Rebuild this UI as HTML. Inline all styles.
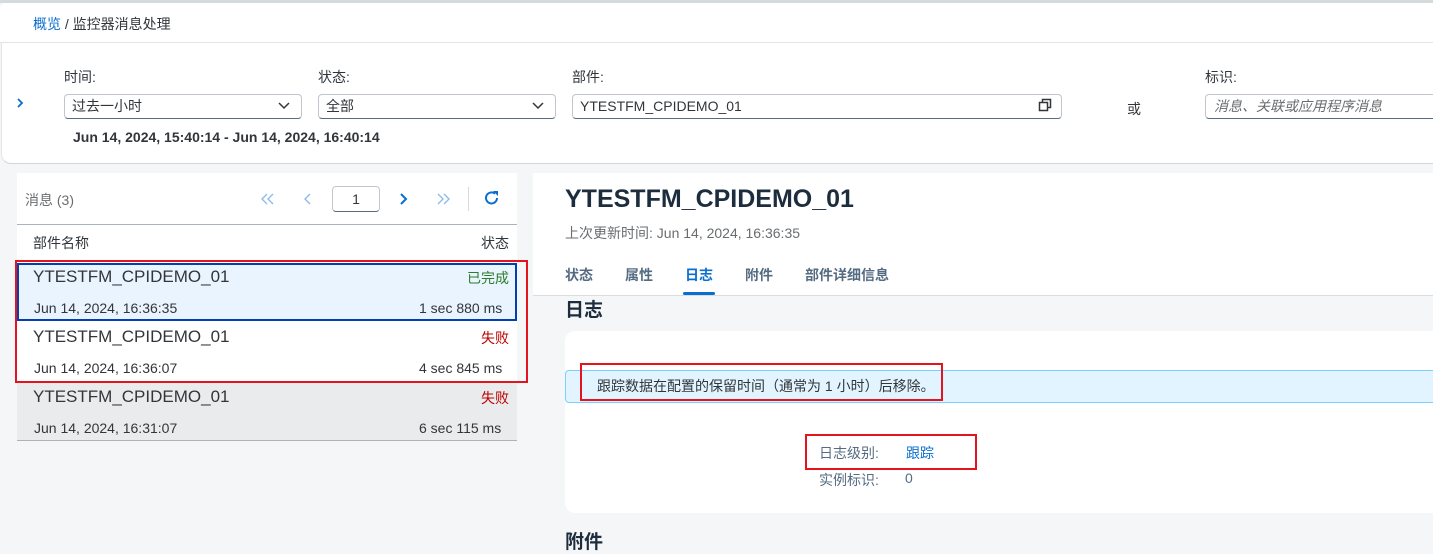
<!DOCTYPE html>
<html><head><meta charset="utf-8"><style>
*{margin:0;padding:0;box-sizing:border-box}
body{width:1433px;height:550px;overflow:hidden;background:#f5f6f7;font-family:"Liberation Sans","Noto Sans CJK SC",sans-serif;color:#32363a;position:relative;font-size:13px;line-height:16px}
.a{position:absolute;white-space:nowrap}
.box{position:absolute;background:#fff;border:1px solid #bfc6ce;border-bottom:1px solid #556b82;border-radius:4px}
.red{position:absolute;border:2px solid #e4141e}
</style></head><body>
<div class="a" style="left:0;top:0;width:1433px;height:3px;background:#d5dadd"></div>
<div class="a" style="left:0;top:3px;width:1433px;height:40px;background:#fff;border-radius:6px 0 0 0;border-bottom:1px solid #e1e4e8"></div>
<div class="a" style="left:33px;top:15px;font-size:14px;line-height:18px"><span style="color:#0a6ed1">概览</span> / 监控器消息处理</div>
<div class="a" style="left:1px;top:43px;width:1432px;height:121px;background:#fff;border-radius:0 0 0 10px;border-bottom:1px solid #d0d6dc;border-left:1px solid #e1e4e8"></div>
<svg class="a" style="left:16px;top:97px" width="8" height="12"><path d="M2 2l4 4-4 4" fill="none" stroke="#0a6ed1" stroke-width="1.8"/></svg>
<div class="a" style="left:64px;top:68px;font-size:14px;line-height:18px">时间:</div>
<div class="a" style="left:318px;top:68px;font-size:14px;line-height:18px">状态:</div>
<div class="a" style="left:572px;top:68px;font-size:14px;line-height:18px">部件:</div>
<div class="a" style="left:1205px;top:68px;font-size:14px;line-height:18px">标识:</div>
<div class="box" style="left:64px;top:94px;width:238px;height:25px"></div>
<div class="a" style="left:72px;top:97px;font-size:14px;line-height:18px">过去一小时</div>
<svg class="a" style="left:278px;top:101px" width="12" height="10"><path d="M1 2l5 5 5-5" fill="none" stroke="#32363a" stroke-width="1.5"/></svg>
<div class="box" style="left:318px;top:94px;width:238px;height:25px"></div>
<div class="a" style="left:326px;top:97px;font-size:14px;line-height:18px">全部</div>
<svg class="a" style="left:532px;top:101px" width="12" height="10"><path d="M1 2l5 5 5-5" fill="none" stroke="#32363a" stroke-width="1.5"/></svg>
<div class="box" style="left:572px;top:94px;width:490px;height:25px"></div>
<div class="a" style="left:580px;top:97px;font-size:14px;line-height:18px">YTESTFM_CPIDEMO_01</div>
<svg class="a" style="left:1038px;top:98px" width="14" height="14"><rect x="1.5" y="4.5" width="8" height="8" fill="none" stroke="#32363a" stroke-width="1.5"/><path d="M4.5 4.5V1.5h8v8h-3" fill="none" stroke="#32363a" stroke-width="1.5"/></svg>
<div class="a" style="left:1127px;top:100px;font-size:14px;line-height:18px">或</div>
<div class="box" style="left:1205px;top:94px;width:240px;height:25px"></div>
<div class="a" style="left:1214px;top:97px;color:#6a6d70;font-style:italic;font-size:14px;line-height:18px">消息、关联或应用程序消息</div>
<div class="a" style="left:73px;top:128px;font-weight:bold;font-size:14px;line-height:18px">Jun 14, 2024, 15:40:14 - Jun 14, 2024, 16:40:14</div>

<div class="a" style="left:17px;top:173px;width:500px;height:268px;background:#fff"></div>
<div class="a" style="left:25px;top:191px;color:#6a6d70;font-size:14px;line-height:18px">消息 (3)</div>
<svg class="a" style="left:260px;top:193px" width="16" height="12"><path d="M7 1L2 6l5 5M13 1L8 6l5 5" fill="none" stroke="#8fbbea" stroke-width="1.4"/></svg>
<svg class="a" style="left:303px;top:193px" width="10" height="12"><path d="M7 1L2 6l5 5" fill="none" stroke="#8fbbea" stroke-width="1.4"/></svg>
<div class="a" style="left:332px;top:186px;width:48px;height:26px;border:1px solid #bfc6ce;border-bottom-color:#556b82;border-radius:4px;text-align:center;line-height:24px;font-size:14px">1</div>
<svg class="a" style="left:399px;top:193px" width="10" height="12"><path d="M2 1l5 5-5 5" fill="none" stroke="#0a6ed1" stroke-width="2"/></svg>
<svg class="a" style="left:436px;top:193px" width="16" height="12"><path d="M2 1l5 5-5 5M8 1l5 5-5 5" fill="none" stroke="#8fbbea" stroke-width="1.4"/></svg>
<div class="a" style="left:468px;top:187px;width:1px;height:24px;background:#d9d9d9"></div>
<svg class="a" style="left:483px;top:189px" width="18" height="18"><path d="M14 9a5.5 5.5 0 1 1-2-4.3" fill="none" stroke="#0a6ed1" stroke-width="2"/><path d="M10 2h5v5z" fill="#0a6ed1"/></svg>
<div class="a" style="left:17px;top:224px;width:500px;height:1px;background:#a9b4be"></div>
<div class="a" style="left:33px;top:234px;font-size:14px;line-height:18px">部件名称</div>
<div class="a" style="left:481px;top:234px;font-size:14px;line-height:18px">状态</div>
<div class="a" style="left:17px;top:263px;width:500px;height:58px;background:#e9f4ff;border:2px solid #0040b0"></div>
<div class="a" style="left:17px;top:381px;width:500px;height:60px;background:#eaebed;border-bottom:1px solid #a9b4be"></div>
<div class="a" style="left:33px;top:267px;font-size:17px;line-height:20px">YTESTFM_CPIDEMO_01</div>
<div class="a" style="left:467px;top:269px;color:#2b7d2b;font-size:14px;line-height:18px">已完成</div>
<div class="a" style="left:34px;top:299px;font-size:14px;line-height:18px">Jun 14, 2024, 16:36:35</div>
<div class="a" style="left:419px;top:299px;font-size:14px;line-height:18px">1 sec 880 ms</div>
<div class="a" style="left:33px;top:327px;font-size:17px;line-height:20px">YTESTFM_CPIDEMO_01</div>
<div class="a" style="left:481px;top:329px;color:#bb0000;font-size:14px;line-height:18px">失败</div>
<div class="a" style="left:34px;top:359px;font-size:14px;line-height:18px">Jun 14, 2024, 16:36:07</div>
<div class="a" style="left:419px;top:359px;font-size:14px;line-height:18px">4 sec 845 ms</div>
<div class="a" style="left:33px;top:387px;font-size:17px;line-height:20px">YTESTFM_CPIDEMO_01</div>
<div class="a" style="left:481px;top:389px;color:#bb0000;font-size:14px;line-height:18px">失败</div>
<div class="a" style="left:34px;top:419px;font-size:14px;line-height:18px">Jun 14, 2024, 16:31:07</div>
<div class="a" style="left:419px;top:419px;font-size:14px;line-height:18px">6 sec 115 ms</div>
<div class="red" style="left:15px;top:260px;width:513px;height:123px"></div>

<div class="a" style="left:533px;top:173px;width:900px;height:123px;background:#fff;border-bottom:1px solid #d9dde2"></div>
<div class="a" style="left:565px;top:184px;font-size:25px;line-height:30px;font-weight:bold;color:#1d2d3e">YTESTFM_CPIDEMO_01</div>
<div class="a" style="left:565px;top:224px;color:#6a6d70;font-size:14px;line-height:18px">上次更新时间: Jun 14, 2024, 16:36:35</div>
<div class="a" style="left:565px;top:266px;font-weight:bold;color:#556b82;font-size:14px;line-height:18px">状态</div>
<div class="a" style="left:625px;top:266px;font-weight:bold;color:#556b82;font-size:14px;line-height:18px">属性</div>
<div class="a" style="left:685px;top:266px;font-weight:bold;color:#0a6ed1;font-size:14px;line-height:18px">日志</div>
<div class="a" style="left:683px;top:292px;width:32px;height:3px;background:#0a6ed1;border-radius:2px"></div>
<div class="a" style="left:745px;top:266px;font-weight:bold;color:#556b82;font-size:14px;line-height:18px">附件</div>
<div class="a" style="left:805px;top:266px;font-weight:bold;color:#556b82;font-size:14px;line-height:18px">部件详细信息</div>
<div class="a" style="left:565px;top:300px;font-size:19px;line-height:22px;font-weight:bold;color:#1d2d3e">日志</div>
<div class="a" style="left:565px;top:331px;width:880px;height:182px;background:#fff;border-radius:10px"></div>
<div class="a" style="left:565px;top:370px;width:880px;height:33px;background:#e1f4ff;border:1px solid #7bcfff;border-radius:4px"></div>
<div class="a" style="left:597px;top:377px;font-size:14px;line-height:18px">跟踪数据在配置的保留时间（通常为 1 小时）后移除。</div>
<div class="red" style="left:580px;top:363px;width:363px;height:38px"></div>
<div class="a" style="left:819px;top:444px;color:#556b82;font-size:14px;line-height:18px">日志级别:</div>
<div class="a" style="left:906px;top:444px;color:#0a6ed1;font-size:14px;line-height:18px">跟踪</div>
<div class="red" style="left:805px;top:434px;width:172px;height:36px"></div>
<div class="a" style="left:819px;top:471px;color:#556b82;font-size:14px;line-height:18px">实例标识:</div>
<div class="a" style="left:905px;top:469px;color:#556b82;font-size:14px;line-height:18px">0</div>
<div class="a" style="left:565px;top:532px;font-size:19px;line-height:22px;font-weight:bold;color:#1d2d3e">附件</div>
</body></html>
